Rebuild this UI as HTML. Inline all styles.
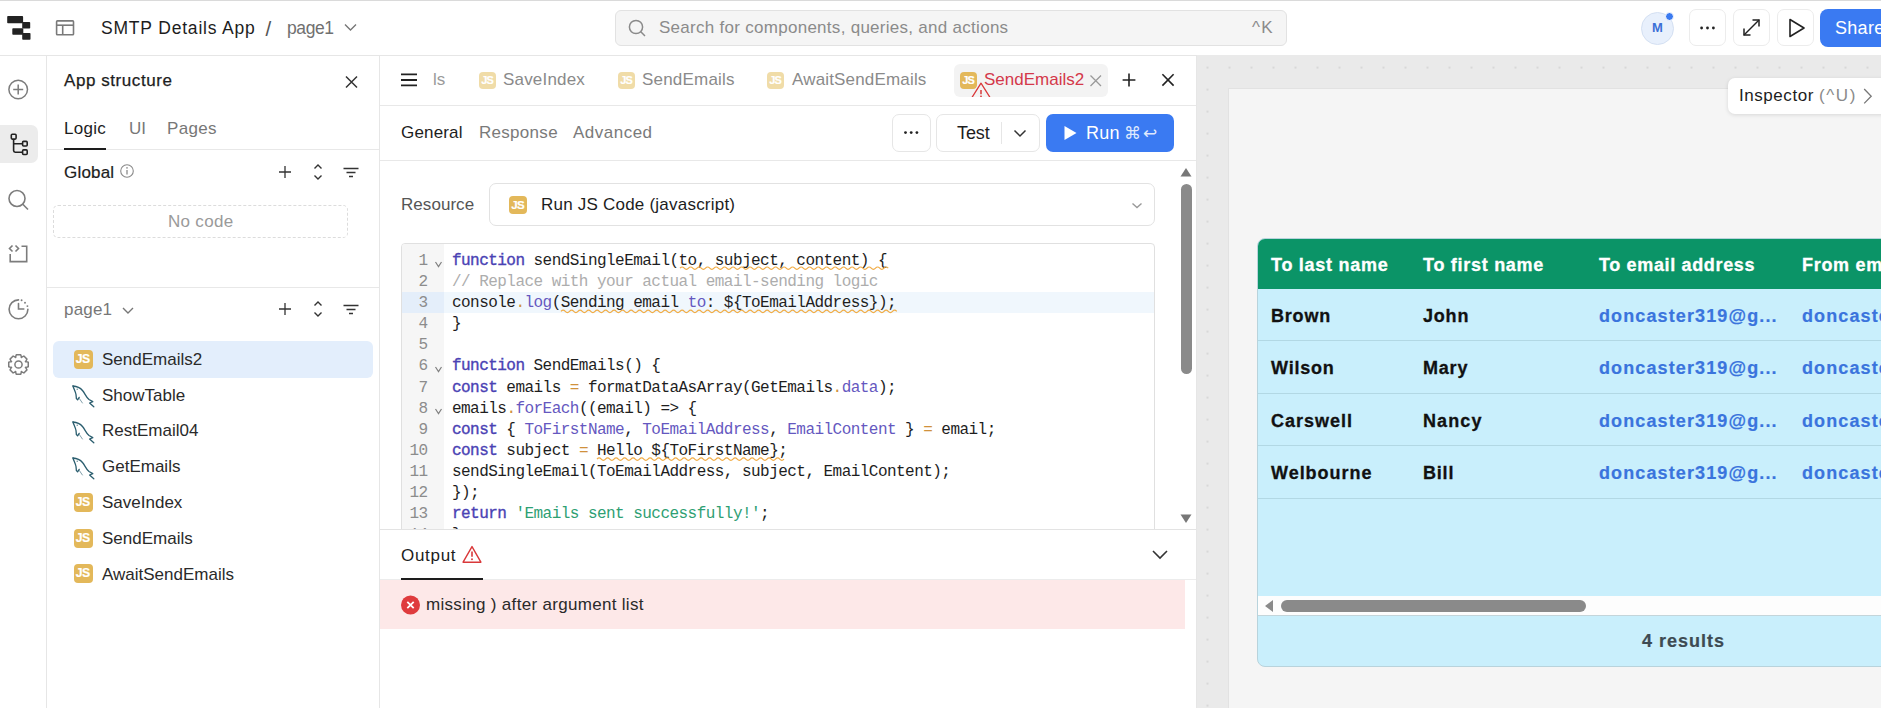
<!DOCTYPE html>
<html><head><meta charset="utf-8"><style>
html,body{margin:0;padding:0;}
body{width:1881px;height:708px;overflow:hidden;position:relative;background:#fff;font-family:"Liberation Sans",sans-serif;}
.t{position:absolute;white-space:pre;}
.r{position:absolute;box-sizing:border-box;}
.js{color:#fff;font-weight:700;text-align:center;font-family:"Liberation Sans",sans-serif;letter-spacing:-0.6px;text-indent:-0.6px;-webkit-text-stroke:0.2px #fff;}
</style></head><body>
<div class="r" style="left:1197px;top:55px;width:684px;height:653px;background:#eaeaea;"></div>
<svg class="r" style="left:1197px;top:56px" width="684" height="652"><defs><pattern id="dots" x="9.5" y="10.6" width="22" height="22" patternUnits="userSpaceOnUse"><circle cx="1" cy="1" r="0.9" fill="#cfcfcf"/></pattern></defs><rect width="684" height="652" fill="url(#dots)"/></svg>
<div class="r" style="left:1228px;top:88px;width:660px;height:630px;background:#f5f5f5;border:1px solid #e2e2e2;"></div>
<div class="r" style="left:0px;top:0px;width:1881px;height:1px;background:#dadada;"></div>
<div class="r" style="left:0px;top:55px;width:1197px;height:1px;background:#e6e6e6;"></div>
<div class="r" style="left:46px;top:56px;width:1px;height:652px;background:#e6e6e6;"></div>
<div class="r" style="left:379px;top:56px;width:1px;height:652px;background:#e6e6e6;"></div>
<div class="r" style="left:1196px;top:56px;width:1px;height:652px;background:#e6e6e6;"></div>
<svg class="r" style="left:0px;top:0px;" width="40" height="48" viewBox="0 0 40 48" fill="none"><g fill="#222"><rect x="7.2" y="16.1" width="15.9" height="7.2" rx="0.8"/><rect x="22.2" y="21.9" width="8" height="6.7" rx="0.8"/><rect x="12.3" y="28.3" width="11" height="6.5" rx="0.8"/><rect x="22.2" y="33" width="8.3" height="6.8" rx="0.8"/></g></svg>
<svg class="r" style="left:50px;top:14px;" width="30" height="28" viewBox="0 0 30 28" fill="none"><g stroke="#7a7a7a" stroke-width="1.6"><rect x="6.6" y="6.9" width="16.9" height="13.9" rx="0.8"/><line x1="6.6" y1="11.2" x2="23.5" y2="11.2"/><line x1="12.7" y1="11.2" x2="12.7" y2="20.8"/></g></svg>
<div class="t" style="left:101px;top:17.14px;font-family:'Liberation Sans', sans-serif;font-size:17.5px;line-height:23px;color:#1d1d1d;font-weight:400;letter-spacing:0.81px;">SMTP Details App</div>
<div class="t" style="left:265.5px;top:14.70px;font-family:'Liberation Sans', sans-serif;font-size:20.5px;line-height:27px;color:#555;font-weight:400;letter-spacing:0px;">/</div>
<div class="t" style="left:287px;top:17.14px;font-family:'Liberation Sans', sans-serif;font-size:17.5px;line-height:23px;color:#707070;font-weight:400;letter-spacing:-0.4px;">page1</div>
<svg class="r" style="left:340px;top:18px;" width="20" height="20" viewBox="0 0 20 20" fill="none"><path d="M5 6.5 L10.5 12 L16 6.5" stroke="#777" stroke-width="1.4"/></svg>
<div class="r" style="left:615px;top:10px;width:672px;height:36px;background:#f5f5f5;border:1px solid #e2e2e2;border-radius:6px;"></div>
<svg class="r" style="left:625px;top:16px;" width="24" height="24" viewBox="0 0 24 24" fill="none"><circle cx="11" cy="11" r="6.6" stroke="#8a8a8a" stroke-width="1.5"/><line x1="15.8" y1="15.8" x2="20" y2="20" stroke="#8a8a8a" stroke-width="1.5"/></svg>
<div class="t" style="left:659px;top:16.81px;font-family:'Liberation Sans', sans-serif;font-size:17px;line-height:22px;color:#8b8b8b;font-weight:400;letter-spacing:0.28px;">Search for components, queries, and actions</div>
<div class="t" style="left:1252px;top:16.81px;font-family:'Liberation Sans', sans-serif;font-size:17px;line-height:22px;color:#8b8b8b;font-weight:400;letter-spacing:1.2px;">^K</div>
<div class="r" style="left:1641px;top:12px;width:33px;height:33px;border-radius:50%;background:#e8f0fc;border:1px solid #d4e0f2;"></div>
<div class="t" style="left:1652px;top:19.30px;font-family:'Liberation Sans', sans-serif;font-size:13px;line-height:17px;color:#3b6fd6;font-weight:700;letter-spacing:0px;">M</div>
<div class="r" style="left:1665px;top:12px;width:9px;height:9px;border-radius:50%;background:#3a7af0;border:1.5px solid #fff;"></div>
<div class="r" style="left:1689px;top:9px;width:37px;height:37px;background:#fff;border:1px solid #ececec;border-radius:7px;"></div>
<div class="r" style="left:1733px;top:9px;width:37px;height:37px;background:#fff;border:1px solid #ececec;border-radius:7px;"></div>
<div class="r" style="left:1777px;top:9px;width:37px;height:37px;background:#fff;border:1px solid #ececec;border-radius:7px;"></div>
<svg class="r" style="left:1689px;top:9px;" width="37" height="37" viewBox="0 0 37 37" fill="none"><g fill="#222"><circle cx="12.6" cy="19" r="1.4"/><circle cx="18.5" cy="19" r="1.4"/><circle cx="24.4" cy="19" r="1.4"/></g></svg>
<svg class="r" style="left:1733px;top:9px;" width="37" height="37" viewBox="0 0 37 37" fill="none"><g stroke="#222" stroke-width="1.5" fill="none"><path d="M11 26 L26 11"/><path d="M19.5 11 H26 V17.5"/><path d="M11 19.5 V26 H17.5"/></g></svg>
<svg class="r" style="left:1777px;top:9px;" width="37" height="37" viewBox="0 0 37 37" fill="none"><path d="M13 10.5 L27 19 L13 27.5 Z" stroke="#222" stroke-width="1.6" stroke-linejoin="round" fill="none"/></svg>
<div class="r" style="left:1820px;top:9px;width:80px;height:38px;background:#3a7af2;border-radius:8px;"></div>
<div class="t" style="left:1835px;top:16.96px;font-family:'Liberation Sans', sans-serif;font-size:18px;line-height:23px;color:#fff;font-weight:400;letter-spacing:0.3px;">Share</div>
<svg class="r" style="left:0px;top:70px;" width="40" height="40" viewBox="0 0 40 40" fill="none"><circle cx="18.2" cy="19.5" r="9.3" stroke="#7c7c7c" stroke-width="1.5"/><path d="M18.2 14.5 V24.5 M13.2 19.5 H23.2" stroke="#7c7c7c" stroke-width="1.5"/></svg>
<div class="r" style="left:0px;top:125px;width:38px;height:38px;background:#ececec;border-radius:0 7px 7px 0;"></div>
<svg class="r" style="left:0px;top:125px;" width="40" height="40" viewBox="0 0 40 40" fill="none"><g stroke="#222" stroke-width="1.6" fill="none"><rect x="11.3" y="9.3" width="4.8" height="4.8" rx="1"/><rect x="22.6" y="16.4" width="4.6" height="4.6" rx="1"/><rect x="22.6" y="24.9" width="4.6" height="4.6" rx="1"/><path d="M13.6 14.1 V25.6 Q13.6 27.2 15.2 27.2 H22.6 M13.6 18.7 H22.6"/></g></svg>
<svg class="r" style="left:0px;top:180px;" width="40" height="40" viewBox="0 0 40 40" fill="none"><circle cx="17" cy="18.5" r="8" stroke="#7c7c7c" stroke-width="1.6"/><line x1="22.8" y1="24.3" x2="28" y2="29.5" stroke="#7c7c7c" stroke-width="1.6"/></svg>
<svg class="r" style="left:0px;top:236px;" width="40" height="40" viewBox="0 0 40 40" fill="none"><g stroke="#7c7c7c" stroke-width="1.6" fill="none"><path d="M12.5 9.5 L9.5 12.5 L12.5 15.5"/><path d="M15.5 9.5 L18.5 12.5 L15.5 15.5"/><path d="M10.2 18 V25.6 H26.7 V10.3 H21.5"/></g></svg>
<svg class="r" style="left:0px;top:290px;" width="40" height="40" viewBox="0 0 40 40" fill="none"><g stroke="#7c7c7c" stroke-width="1.6" fill="none" stroke-linecap="round"><path d="M18.5 9.9 A9.4 9.4 0 1 0 27.9 19.3"/><path d="M18.5 13.6 V19 H23.8"/></g><g fill="#7c7c7c"><circle cx="21.6" cy="10.3" r="0.95"/><circle cx="25" cy="12.7" r="0.95"/><circle cx="27.4" cy="16.1" r="0.95"/></g></svg>
<svg class="r" style="left:0px;top:345px;" width="40" height="40" viewBox="0 0 40 40" fill="none"><polygon points="28.26,17.32 28.26,21.68 25.44,22.60 25.60,22.22 26.94,24.86 23.86,27.94 21.22,26.60 21.60,26.44 20.68,29.26 16.32,29.26 15.40,26.44 15.78,26.60 13.14,27.94 10.06,24.86 11.40,22.22 11.56,22.60 8.74,21.68 8.74,17.32 11.56,16.40 11.40,16.78 10.06,14.14 13.14,11.06 15.78,12.40 15.40,12.56 16.32,9.74 20.68,9.74 21.60,12.56 21.22,12.40 23.86,11.06 26.94,14.14 25.60,16.78 25.44,16.40" stroke="#7c7c7c" stroke-width="1.5" stroke-linejoin="round"/><circle cx="18.5" cy="19.5" r="3.6" stroke="#7c7c7c" stroke-width="1.5"/></svg>
<div class="t" style="left:64px;top:69.51px;font-family:'Liberation Sans', sans-serif;font-size:17px;line-height:22px;color:#1d1d1d;font-weight:400;letter-spacing:0.57px;-webkit-text-stroke:0.25px #1d1d1d;">App structure</div>
<svg class="r" style="left:340px;top:70px;" width="24" height="24" viewBox="0 0 24 24" fill="none"><path d="M6 6.5 L17 17.5 M17 6.5 L6 17.5" stroke="#333" stroke-width="1.5"/></svg>
<div class="t" style="left:64px;top:117.91px;font-family:'Liberation Sans', sans-serif;font-size:17px;line-height:22px;color:#1d1d1d;font-weight:400;letter-spacing:0.3px;">Logic</div>
<div class="t" style="left:129px;top:117.91px;font-family:'Liberation Sans', sans-serif;font-size:17px;line-height:22px;color:#777;font-weight:400;letter-spacing:0px;">UI</div>
<div class="t" style="left:167px;top:117.91px;font-family:'Liberation Sans', sans-serif;font-size:17px;line-height:22px;color:#777;font-weight:400;letter-spacing:0.3px;">Pages</div>
<div class="r" style="left:47px;top:149px;width:332px;height:1px;background:#e8e8e8;"></div>
<div class="r" style="left:64px;top:148px;width:42px;height:2px;background:#1d1d1d;"></div>
<div class="t" style="left:64px;top:162.31px;font-family:'Liberation Sans', sans-serif;font-size:17px;line-height:22px;color:#1d1d1d;font-weight:400;letter-spacing:0.2px;-webkit-text-stroke:0.2px #1d1d1d;">Global</div>
<svg class="r" style="left:118px;top:162px;" width="18" height="18" viewBox="0 0 18 18" fill="none"><circle cx="9" cy="9" r="6.3" stroke="#8a8a8a" stroke-width="1.1"/><path d="M9 8 V12.5" stroke="#8a8a8a" stroke-width="1.3"/><circle cx="9" cy="5.9" r="0.8" fill="#8a8a8a"/></svg>
<svg class="r" style="left:275px;top:162px;" width="20" height="20" viewBox="0 0 20 20" fill="none"><path d="M10 4 V16 M4 10 H16" stroke="#333" stroke-width="1.3"/></svg>
<svg class="r" style="left:308px;top:162px;" width="20" height="20" viewBox="0 0 20 20" fill="none"><path d="M6.5 6.5 L10 3 L13.5 6.5 M6.5 13.5 L10 17 L13.5 13.5" stroke="#333" stroke-width="1.4" fill="none"/></svg>
<svg class="r" style="left:341px;top:162px;" width="20" height="20" viewBox="0 0 20 20" fill="none"><path d="M2.5 6.5 H17.5 M5.5 10.5 H14.5 M8 14.5 H12" stroke="#333" stroke-width="1.3"/></svg>
<div class="r" style="left:53px;top:205px;width:295px;height:33px;border:1px dashed #dcdcdc;border-radius:5px;"></div>
<div class="t" style="left:168px;top:210.91px;font-family:'Liberation Sans', sans-serif;font-size:17px;line-height:22px;color:#9a9a9a;font-weight:400;letter-spacing:0.3px;">No code</div>
<div class="r" style="left:47px;top:287px;width:332px;height:1px;background:#e8e8e8;"></div>
<div class="t" style="left:64px;top:299.11px;font-family:'Liberation Sans', sans-serif;font-size:17px;line-height:22px;color:#777;font-weight:400;letter-spacing:0.2px;">page1</div>
<svg class="r" style="left:117.5px;top:301px;" width="20" height="20" viewBox="0 0 20 20" fill="none"><path d="M5 7 L10 12 L15 7" stroke="#777" stroke-width="1.4" fill="none"/></svg>
<svg class="r" style="left:275px;top:299px;" width="20" height="20" viewBox="0 0 20 20" fill="none"><path d="M10 4 V16 M4 10 H16" stroke="#333" stroke-width="1.3"/></svg>
<svg class="r" style="left:308px;top:299px;" width="20" height="20" viewBox="0 0 20 20" fill="none"><path d="M6.5 6.5 L10 3 L13.5 6.5 M6.5 13.5 L10 17 L13.5 13.5" stroke="#333" stroke-width="1.4" fill="none"/></svg>
<svg class="r" style="left:341px;top:299px;" width="20" height="20" viewBox="0 0 20 20" fill="none"><path d="M2.5 6.5 H17.5 M5.5 10.5 H14.5 M8 14.5 H12" stroke="#333" stroke-width="1.3"/></svg>
<div class="r" style="left:53px;top:341px;width:320px;height:37px;background:#e3eefc;border-radius:6px;"></div>
<div class="r js" style="left:73.5px;top:350px;width:19px;height:19px;background:#e3b85a;border-radius:4px;font-size:12.2px;line-height:19px">JS</div>
<div class="t" style="left:102px;top:348.71px;font-family:'Liberation Sans', sans-serif;font-size:17px;line-height:22px;color:#2a2a2a;font-weight:400;letter-spacing:0px;">SendEmails2</div>
<svg class="r" style="left:72px;top:385px;" width="24" height="24" viewBox="0 0 24 24" fill="none"><g stroke="#2a5d6e" stroke-width="1.3" fill="none" stroke-linejoin="round" stroke-linecap="round"><path d="M1 1 C4 1.2 8 2.5 10.5 5.5 C13 8.5 14 12 17 14.5 L20.8 16.6 L17.6 18 L21.8 21.8"/><path d="M1 1 C1.6 3.5 3.6 6.5 4 9.5 L4.4 13.6 L5.6 14.8 L7.2 12.4"/><path d="M7.4 13.6 L10.4 18" stroke-width="0.6"/></g><circle cx="5.2" cy="4.2" r="0.6" fill="#2a5d6e"/></svg>
<div class="t" style="left:102px;top:384.54px;font-family:'Liberation Sans', sans-serif;font-size:17px;line-height:22px;color:#2a2a2a;font-weight:400;letter-spacing:0px;">ShowTable</div>
<svg class="r" style="left:72px;top:421px;" width="24" height="24" viewBox="0 0 24 24" fill="none"><g stroke="#2a5d6e" stroke-width="1.3" fill="none" stroke-linejoin="round" stroke-linecap="round"><path d="M1 1 C4 1.2 8 2.5 10.5 5.5 C13 8.5 14 12 17 14.5 L20.8 16.6 L17.6 18 L21.8 21.8"/><path d="M1 1 C1.6 3.5 3.6 6.5 4 9.5 L4.4 13.6 L5.6 14.8 L7.2 12.4"/><path d="M7.4 13.6 L10.4 18" stroke-width="0.6"/></g><circle cx="5.2" cy="4.2" r="0.6" fill="#2a5d6e"/></svg>
<div class="t" style="left:102px;top:420.37px;font-family:'Liberation Sans', sans-serif;font-size:17px;line-height:22px;color:#2a2a2a;font-weight:400;letter-spacing:0px;">RestEmail04</div>
<svg class="r" style="left:72px;top:457px;" width="24" height="24" viewBox="0 0 24 24" fill="none"><g stroke="#2a5d6e" stroke-width="1.3" fill="none" stroke-linejoin="round" stroke-linecap="round"><path d="M1 1 C4 1.2 8 2.5 10.5 5.5 C13 8.5 14 12 17 14.5 L20.8 16.6 L17.6 18 L21.8 21.8"/><path d="M1 1 C1.6 3.5 3.6 6.5 4 9.5 L4.4 13.6 L5.6 14.8 L7.2 12.4"/><path d="M7.4 13.6 L10.4 18" stroke-width="0.6"/></g><circle cx="5.2" cy="4.2" r="0.6" fill="#2a5d6e"/></svg>
<div class="t" style="left:102px;top:456.20px;font-family:'Liberation Sans', sans-serif;font-size:17px;line-height:22px;color:#2a2a2a;font-weight:400;letter-spacing:0px;">GetEmails</div>
<div class="r js" style="left:73.5px;top:493px;width:19px;height:19px;background:#e3b85a;border-radius:4px;font-size:12.2px;line-height:19px">JS</div>
<div class="t" style="left:102px;top:492.03px;font-family:'Liberation Sans', sans-serif;font-size:17px;line-height:22px;color:#2a2a2a;font-weight:400;letter-spacing:0px;">SaveIndex</div>
<div class="r js" style="left:73.5px;top:529px;width:19px;height:19px;background:#e3b85a;border-radius:4px;font-size:12.2px;line-height:19px">JS</div>
<div class="t" style="left:102px;top:527.86px;font-family:'Liberation Sans', sans-serif;font-size:17px;line-height:22px;color:#2a2a2a;font-weight:400;letter-spacing:0px;">SendEmails</div>
<div class="r js" style="left:73.5px;top:564px;width:19px;height:19px;background:#e3b85a;border-radius:4px;font-size:12.2px;line-height:19px">JS</div>
<div class="t" style="left:102px;top:563.69px;font-family:'Liberation Sans', sans-serif;font-size:17px;line-height:22px;color:#2a2a2a;font-weight:400;letter-spacing:0px;">AwaitSendEmails</div>
<svg class="r" style="left:398px;top:68px;" width="24" height="24" viewBox="0 0 24 24" fill="none"><path d="M3 6.4 H19 M3 12 H19 M3 17.3 H19" stroke="#222" stroke-width="1.8"/></svg>
<div class="t" style="left:433px;top:68.61px;font-family:'Liberation Sans', sans-serif;font-size:17px;line-height:22px;color:#9a9a9a;font-weight:400;letter-spacing:0px;">ls</div>
<div class="r" style="left:380px;top:105px;width:816px;height:1px;background:#e8e8e8;"></div>
<div class="r js" style="left:479px;top:72px;width:17px;height:17px;background:#f0dca8;border-radius:4px;font-size:10.9px;line-height:17px">JS</div>
<div class="t" style="left:503px;top:68.61px;font-family:'Liberation Sans', sans-serif;font-size:17px;line-height:22px;color:#8a8a8a;font-weight:400;letter-spacing:0.19px;">SaveIndex</div>
<div class="r js" style="left:618px;top:72px;width:17px;height:17px;background:#f0dca8;border-radius:4px;font-size:10.9px;line-height:17px">JS</div>
<div class="t" style="left:642px;top:68.61px;font-family:'Liberation Sans', sans-serif;font-size:17px;line-height:22px;color:#8a8a8a;font-weight:400;letter-spacing:0.2px;">SendEmails</div>
<div class="r js" style="left:767px;top:72px;width:17px;height:17px;background:#f0dca8;border-radius:4px;font-size:10.9px;line-height:17px">JS</div>
<div class="t" style="left:792px;top:68.61px;font-family:'Liberation Sans', sans-serif;font-size:17px;line-height:22px;color:#8a8a8a;font-weight:400;letter-spacing:0.17px;">AwaitSendEmails</div>
<div class="r" style="left:954px;top:64px;width:154px;height:33px;background:#f3f3f3;border-radius:6px;"></div>
<div class="r js" style="left:960px;top:72px;width:17px;height:17px;background:#e3b85a;border-radius:4px;font-size:10.9px;line-height:17px">JS</div>
<svg class="r" style="left:968px;top:78px;" width="26" height="19" viewBox="0 0 26 19" fill="none"><path d="M3 21 L13 5.2 L23 21" stroke="#f4f4f4" stroke-width="3.4" fill="none" stroke-linejoin="round"/><path d="M3 21 L13 5.2 L23 21" stroke="#d9383a" stroke-width="1.3" fill="none" stroke-linejoin="round"/><path d="M13 12 V16.3" stroke="#d9383a" stroke-width="1.5"/><rect x="12.2" y="17.6" width="1.6" height="1.4" fill="#d9383a"/></svg>
<div class="t" style="left:984px;top:68.61px;font-family:'Liberation Sans', sans-serif;font-size:17px;line-height:22px;color:#d4384a;font-weight:400;letter-spacing:0px;">SendEmails2</div>
<svg class="r" style="left:1086px;top:70px;" width="20" height="20" viewBox="0 0 20 20" fill="none"><path d="M4.5 5.5 L15 16 M15 5.5 L4.5 16" stroke="#999" stroke-width="1.3"/></svg>
<svg class="r" style="left:1119px;top:70px;" width="20" height="20" viewBox="0 0 20 20" fill="none"><path d="M10 3.6 V16.4 M3.6 10 H16.4" stroke="#222" stroke-width="1.6"/></svg>
<svg class="r" style="left:1158px;top:70px;" width="20" height="20" viewBox="0 0 20 20" fill="none"><path d="M4.4 4.2 L15.6 15.6 M15.6 4.2 L4.4 15.6" stroke="#222" stroke-width="1.6"/></svg>
<div class="t" style="left:401px;top:121.71px;font-family:'Liberation Sans', sans-serif;font-size:17px;line-height:22px;color:#1d1d1d;font-weight:400;letter-spacing:0.17px;">General</div>
<div class="t" style="left:479px;top:121.71px;font-family:'Liberation Sans', sans-serif;font-size:17px;line-height:22px;color:#7a7a7a;font-weight:400;letter-spacing:0.29px;">Response</div>
<div class="t" style="left:573px;top:121.71px;font-family:'Liberation Sans', sans-serif;font-size:17px;line-height:22px;color:#7a7a7a;font-weight:400;letter-spacing:0.49px;">Advanced</div>
<div class="r" style="left:892px;top:114px;width:39px;height:38px;background:#fff;border:1px solid #e6e6e6;border-radius:7px;"></div>
<svg class="r" style="left:892px;top:114px;" width="39" height="38" viewBox="0 0 39 38" fill="none"><g fill="#222"><circle cx="13.5" cy="18.6" r="1.4"/><circle cx="19.2" cy="18.6" r="1.4"/><circle cx="24.9" cy="18.6" r="1.4"/></g></svg>
<div class="r" style="left:936px;top:114px;width:104px;height:38px;background:#fff;border:1px solid #e6e6e6;border-radius:7px;"></div>
<div class="t" style="left:957px;top:122.46px;font-family:'Liberation Sans', sans-serif;font-size:18px;line-height:23px;color:#1d1d1d;font-weight:400;letter-spacing:-0.1px;">Test</div>
<div class="r" style="left:1001px;top:122px;width:1px;height:22px;background:#e6e6e6;"></div>
<svg class="r" style="left:1010px;top:123px;" width="20" height="20" viewBox="0 0 20 20" fill="none"><path d="M4.5 7.5 L10 13 L15.5 7.5" stroke="#333" stroke-width="1.5" fill="none"/></svg>
<div class="r" style="left:1046px;top:114px;width:128px;height:38px;background:#3a7af2;border-radius:7px;"></div>
<svg class="r" style="left:1060px;top:121px;" width="22" height="24" viewBox="0 0 22 24" fill="none"><path d="M4.5 5 L16.5 12 L4.5 19 Z" fill="#fff"/></svg>
<div class="t" style="left:1086px;top:122.26px;font-family:'Liberation Sans', sans-serif;font-size:18px;line-height:23px;color:#fff;font-weight:400;letter-spacing:0.2px;">Run</div>
<div class="t" style="left:1124px;top:123.11px;font-family:'Liberation Sans', sans-serif;font-size:17px;line-height:22px;color:#dfe9fd;font-weight:400;letter-spacing:2px;">⌘↩</div>
<div class="r" style="left:380px;top:160px;width:816px;height:1px;background:#e8e8e8;"></div>
<svg class="r" style="left:1178px;top:164px;" width="16" height="16" viewBox="0 0 16 16" fill="none"><path d="M2.5 12.5 L8 4 L13.5 12.5 Z" fill="#777"/></svg>
<div class="r" style="left:1181px;top:184px;width:11px;height:190px;background:#8a8a8a;border-radius:6px;"></div>
<svg class="r" style="left:1178px;top:511px;" width="16" height="16" viewBox="0 0 16 16" fill="none"><path d="M2.5 3.5 L8 12 L13.5 3.5 Z" fill="#777"/></svg>
<div class="t" style="left:401px;top:194.11px;font-family:'Liberation Sans', sans-serif;font-size:17px;line-height:22px;color:#555;font-weight:400;letter-spacing:0.05px;">Resource</div>
<div class="r" style="left:489px;top:183px;width:666px;height:43px;background:#fff;border:1px solid #e2e2e2;border-radius:7px;"></div>
<div class="r js" style="left:509px;top:196px;width:18px;height:18px;background:#e3b85a;border-radius:4px;font-size:11.5px;line-height:18px">JS</div>
<div class="t" style="left:541px;top:194.41px;font-family:'Liberation Sans', sans-serif;font-size:17px;line-height:22px;color:#1d1d1d;font-weight:400;letter-spacing:0.22px;">Run JS Code (javascript)</div>
<svg class="r" style="left:1127px;top:195px;" width="20" height="20" viewBox="0 0 20 20" fill="none"><path d="M5.5 8.5 L10 12.5 L14.5 8.5" stroke="#999" stroke-width="1.4" fill="none"/></svg>
<div class="r" style="left:401px;top:243px;width:754px;height:300px;background:#fff;border:1px solid #e0e0e0;border-radius:4px;"></div>
<div class="r" style="left:402px;top:244px;width:42px;height:285px;background:#f6f6f6;border-radius:3px 0 0 0;"></div>
<div class="r" style="left:402px;top:291.5px;width:42px;height:21px;background:#e4eefa;"></div>
<div class="r" style="left:444px;top:291.5px;width:710px;height:21px;background:#f0f7fd;"></div>
<div class="r" style="left:380px;top:244px;width:800px;height:285px;overflow:hidden;">
<div class="t" style="left:38.60000000000002px;top:6.84px;font-family:'Liberation Mono', monospace;font-size:16px;line-height:21px;color:#8c8c8c;font-weight:400;letter-spacing:-0.6px;">1</div>
<div class="t" style="left:72px;top:6.84px;font-family:'Liberation Mono', monospace;font-size:16px;line-height:21px;color:#1e1e1e;font-weight:400;letter-spacing:-0.54px;"><span style="color:#4a42b4;-webkit-text-stroke:0.35px #4a42b4;">function</span><span style="color:#1e1e1e;"> sendSingleEmail(to, subject, content) {</span></div>
<div class="t" style="left:38.60000000000002px;top:27.96px;font-family:'Liberation Mono', monospace;font-size:16px;line-height:21px;color:#8c8c8c;font-weight:400;letter-spacing:-0.6px;">2</div>
<div class="t" style="left:72px;top:27.96px;font-family:'Liberation Mono', monospace;font-size:16px;line-height:21px;color:#1e1e1e;font-weight:400;letter-spacing:-0.54px;"><span style="color:#adadad;">// Replace with your actual email-sending logic</span></div>
<div class="t" style="left:38.60000000000002px;top:49.08px;font-family:'Liberation Mono', monospace;font-size:16px;line-height:21px;color:#8c8c8c;font-weight:400;letter-spacing:-0.6px;">3</div>
<div class="t" style="left:72px;top:49.08px;font-family:'Liberation Mono', monospace;font-size:16px;line-height:21px;color:#1e1e1e;font-weight:400;letter-spacing:-0.54px;"><span style="color:#1e1e1e;">console</span><span style="color:#d0913c;">.</span><span style="color:#6558c0;">log</span><span style="color:#1e1e1e;">(Sending email </span><span style="color:#6558c0;">to</span><span style="color:#1e1e1e;">: ${ToEmailAddress});</span></div>
<div class="t" style="left:38.60000000000002px;top:70.20px;font-family:'Liberation Mono', monospace;font-size:16px;line-height:21px;color:#8c8c8c;font-weight:400;letter-spacing:-0.6px;">4</div>
<div class="t" style="left:72px;top:70.20px;font-family:'Liberation Mono', monospace;font-size:16px;line-height:21px;color:#1e1e1e;font-weight:400;letter-spacing:-0.54px;"><span style="color:#1e1e1e;">}</span></div>
<div class="t" style="left:38.60000000000002px;top:91.32px;font-family:'Liberation Mono', monospace;font-size:16px;line-height:21px;color:#8c8c8c;font-weight:400;letter-spacing:-0.6px;">5</div>
<div class="t" style="left:72px;top:91.32px;font-family:'Liberation Mono', monospace;font-size:16px;line-height:21px;color:#1e1e1e;font-weight:400;letter-spacing:-0.54px;"></div>
<div class="t" style="left:38.60000000000002px;top:112.44px;font-family:'Liberation Mono', monospace;font-size:16px;line-height:21px;color:#8c8c8c;font-weight:400;letter-spacing:-0.6px;">6</div>
<div class="t" style="left:72px;top:112.44px;font-family:'Liberation Mono', monospace;font-size:16px;line-height:21px;color:#1e1e1e;font-weight:400;letter-spacing:-0.54px;"><span style="color:#4a42b4;-webkit-text-stroke:0.35px #4a42b4;">function</span><span style="color:#1e1e1e;"> SendEmails() {</span></div>
<div class="t" style="left:38.60000000000002px;top:133.56px;font-family:'Liberation Mono', monospace;font-size:16px;line-height:21px;color:#8c8c8c;font-weight:400;letter-spacing:-0.6px;">7</div>
<div class="t" style="left:72px;top:133.56px;font-family:'Liberation Mono', monospace;font-size:16px;line-height:21px;color:#1e1e1e;font-weight:400;letter-spacing:-0.54px;"><span style="color:#4a42b4;-webkit-text-stroke:0.35px #4a42b4;">const</span><span style="color:#1e1e1e;"> emails </span><span style="color:#d0913c;">=</span><span style="color:#1e1e1e;"> formatDataAsArray(GetEmails</span><span style="color:#d0913c;">.</span><span style="color:#6558c0;">data</span><span style="color:#1e1e1e;">);</span></div>
<div class="t" style="left:38.60000000000002px;top:154.68px;font-family:'Liberation Mono', monospace;font-size:16px;line-height:21px;color:#8c8c8c;font-weight:400;letter-spacing:-0.6px;">8</div>
<div class="t" style="left:72px;top:154.68px;font-family:'Liberation Mono', monospace;font-size:16px;line-height:21px;color:#1e1e1e;font-weight:400;letter-spacing:-0.54px;"><span style="color:#1e1e1e;">emails</span><span style="color:#d0913c;">.</span><span style="color:#6558c0;">forEach</span><span style="color:#1e1e1e;">((email) =&gt; {</span></div>
<div class="t" style="left:38.60000000000002px;top:175.80px;font-family:'Liberation Mono', monospace;font-size:16px;line-height:21px;color:#8c8c8c;font-weight:400;letter-spacing:-0.6px;">9</div>
<div class="t" style="left:72px;top:175.80px;font-family:'Liberation Mono', monospace;font-size:16px;line-height:21px;color:#1e1e1e;font-weight:400;letter-spacing:-0.54px;"><span style="color:#4a42b4;-webkit-text-stroke:0.35px #4a42b4;">const</span><span style="color:#1e1e1e;"> { </span><span style="color:#6558c0;">ToFirstName</span><span style="color:#1e1e1e;">, </span><span style="color:#6558c0;">ToEmailAddress</span><span style="color:#1e1e1e;">, </span><span style="color:#6558c0;">EmailContent</span><span style="color:#1e1e1e;"> } </span><span style="color:#d0913c;">=</span><span style="color:#1e1e1e;"> email;</span></div>
<div class="t" style="left:29.600000000000023px;top:196.92px;font-family:'Liberation Mono', monospace;font-size:16px;line-height:21px;color:#8c8c8c;font-weight:400;letter-spacing:-0.6px;">10</div>
<div class="t" style="left:72px;top:196.92px;font-family:'Liberation Mono', monospace;font-size:16px;line-height:21px;color:#1e1e1e;font-weight:400;letter-spacing:-0.54px;"><span style="color:#4a42b4;-webkit-text-stroke:0.35px #4a42b4;">const</span><span style="color:#1e1e1e;"> subject </span><span style="color:#d0913c;">=</span><span style="color:#1e1e1e;"> Hello ${ToFirstName};</span></div>
<div class="t" style="left:29.600000000000023px;top:218.04px;font-family:'Liberation Mono', monospace;font-size:16px;line-height:21px;color:#8c8c8c;font-weight:400;letter-spacing:-0.6px;">11</div>
<div class="t" style="left:72px;top:218.04px;font-family:'Liberation Mono', monospace;font-size:16px;line-height:21px;color:#1e1e1e;font-weight:400;letter-spacing:-0.54px;"><span style="color:#1e1e1e;">sendSingleEmail(ToEmailAddress, subject, EmailContent);</span></div>
<div class="t" style="left:29.600000000000023px;top:239.16px;font-family:'Liberation Mono', monospace;font-size:16px;line-height:21px;color:#8c8c8c;font-weight:400;letter-spacing:-0.6px;">12</div>
<div class="t" style="left:72px;top:239.16px;font-family:'Liberation Mono', monospace;font-size:16px;line-height:21px;color:#1e1e1e;font-weight:400;letter-spacing:-0.54px;"><span style="color:#1e1e1e;">});</span></div>
<div class="t" style="left:29.600000000000023px;top:260.28px;font-family:'Liberation Mono', monospace;font-size:16px;line-height:21px;color:#8c8c8c;font-weight:400;letter-spacing:-0.6px;">13</div>
<div class="t" style="left:72px;top:260.28px;font-family:'Liberation Mono', monospace;font-size:16px;line-height:21px;color:#1e1e1e;font-weight:400;letter-spacing:-0.54px;"><span style="color:#4a42b4;-webkit-text-stroke:0.35px #4a42b4;">return</span> <span style="color:#2ea073;">&#x27;Emails sent successfully!&#x27;</span><span style="color:#1e1e1e;">;</span></div>
<div class="t" style="left:29.600000000000023px;top:281.40px;font-family:'Liberation Mono', monospace;font-size:16px;line-height:21px;color:#8c8c8c;font-weight:400;letter-spacing:-0.6px;">14</div>
<div class="t" style="left:72px;top:281.40px;font-family:'Liberation Mono', monospace;font-size:16px;line-height:21px;color:#1e1e1e;font-weight:400;letter-spacing:-0.54px;"><span style="color:#1e1e1e;">}</span></div>
</div>
<svg class="r" style="left:434px;top:261px;" width="10" height="7" viewBox="0 0 10 7" fill="none"><path d="M1.5 1 L4.5 5.6 L7.5 1" stroke="#808080" stroke-width="1.2" fill="none"/></svg>
<svg class="r" style="left:434px;top:366px;" width="10" height="7" viewBox="0 0 10 7" fill="none"><path d="M1.5 1 L4.5 5.6 L7.5 1" stroke="#808080" stroke-width="1.2" fill="none"/></svg>
<svg class="r" style="left:434px;top:408px;" width="10" height="7" viewBox="0 0 10 7" fill="none"><path d="M1.5 1 L4.5 5.6 L7.5 1" stroke="#808080" stroke-width="1.2" fill="none"/></svg>
<svg class="r" style="left:0;top:0" width="1200" height="600"><path d="M680 268.2 Q682.12 265.80 684.25 268.2 T688.50 268.2 T692.75 268.2 T697.00 268.2 T701.25 268.2 T705.50 268.2 T709.75 268.2 T714.00 268.2 T718.25 268.2 T722.50 268.2 T726.75 268.2 T731.00 268.2 T735.25 268.2 T739.50 268.2 T743.75 268.2 T748.00 268.2 T752.25 268.2 T756.50 268.2 T760.75 268.2 T765.00 268.2 T769.25 268.2 T773.50 268.2 T777.75 268.2 T782.00 268.2 T786.25 268.2 T790.50 268.2 T794.75 268.2 T799.00 268.2 T803.25 268.2 T807.50 268.2 T811.75 268.2 T816.00 268.2 T820.25 268.2 T824.50 268.2 T828.75 268.2 T833.00 268.2 T837.25 268.2 T841.50 268.2 T845.75 268.2 T850.00 268.2 T854.25 268.2 T858.50 268.2 T862.75 268.2 T867.00 268.2 T871.25 268.2 T875.50 268.2 T879.75 268.2 T884.00 268.2 T888.25 268.2" stroke="#f1ac45" stroke-width="1.2" fill="none"/></svg>
<svg class="r" style="left:0;top:0" width="1200" height="600"><path d="M561 311.4 Q563.12 309.00 565.25 311.4 T569.50 311.4 T573.75 311.4 T578.00 311.4 T582.25 311.4 T586.50 311.4 T590.75 311.4 T595.00 311.4 T599.25 311.4 T603.50 311.4 T607.75 311.4 T612.00 311.4 T616.25 311.4 T620.50 311.4 T624.75 311.4 T629.00 311.4 T633.25 311.4 T637.50 311.4 T641.75 311.4 T646.00 311.4 T650.25 311.4 T654.50 311.4 T658.75 311.4 T663.00 311.4 T667.25 311.4 T671.50 311.4 T675.75 311.4 T680.00 311.4 T684.25 311.4 T688.50 311.4 T692.75 311.4 T697.00 311.4 T701.25 311.4 T705.50 311.4 T709.75 311.4 T714.00 311.4 T718.25 311.4 T722.50 311.4 T726.75 311.4 T731.00 311.4 T735.25 311.4 T739.50 311.4 T743.75 311.4 T748.00 311.4 T752.25 311.4 T756.50 311.4 T760.75 311.4 T765.00 311.4 T769.25 311.4 T773.50 311.4 T777.75 311.4 T782.00 311.4 T786.25 311.4 T790.50 311.4 T794.75 311.4 T799.00 311.4 T803.25 311.4 T807.50 311.4 T811.75 311.4 T816.00 311.4 T820.25 311.4 T824.50 311.4 T828.75 311.4 T833.00 311.4 T837.25 311.4 T841.50 311.4 T845.75 311.4 T850.00 311.4 T854.25 311.4 T858.50 311.4 T862.75 311.4 T867.00 311.4 T871.25 311.4 T875.50 311.4 T879.75 311.4 T884.00 311.4 T888.25 311.4 T892.50 311.4 T896.75 311.4" stroke="#f1ac45" stroke-width="1.2" fill="none"/></svg>
<svg class="r" style="left:0;top:0" width="1200" height="600"><path d="M597 459.1 Q599.12 456.70 601.25 459.1 T605.50 459.1 T609.75 459.1 T614.00 459.1 T618.25 459.1 T622.50 459.1 T626.75 459.1 T631.00 459.1 T635.25 459.1 T639.50 459.1 T643.75 459.1 T648.00 459.1 T652.25 459.1 T656.50 459.1 T660.75 459.1 T665.00 459.1 T669.25 459.1 T673.50 459.1 T677.75 459.1 T682.00 459.1 T686.25 459.1 T690.50 459.1 T694.75 459.1 T699.00 459.1 T703.25 459.1 T707.50 459.1 T711.75 459.1 T716.00 459.1 T720.25 459.1 T724.50 459.1 T728.75 459.1 T733.00 459.1 T737.25 459.1 T741.50 459.1 T745.75 459.1 T750.00 459.1 T754.25 459.1 T758.50 459.1 T762.75 459.1 T767.00 459.1 T771.25 459.1 T775.50 459.1 T779.75 459.1 T784.00 459.1" stroke="#f1ac45" stroke-width="1.2" fill="none"/></svg>
<div class="r" style="left:380px;top:529px;width:816px;height:1px;background:#e3e3e3;"></div>
<div class="r" style="left:380px;top:530px;width:816px;height:178px;background:#fff;"></div>
<div class="t" style="left:401px;top:544.61px;font-family:'Liberation Sans', sans-serif;font-size:17px;line-height:22px;color:#1d1d1d;font-weight:400;letter-spacing:0.7px;">Output</div>
<svg class="r" style="left:460px;top:543px;" width="24" height="22" viewBox="0 0 24 22" fill="none"><path d="M12 3.6 L20.9 19.2 H3.1 Z" stroke="#d9383a" stroke-width="1.4" fill="none" stroke-linejoin="round"/><path d="M12 8.5 V13.8" stroke="#d9383a" stroke-width="1.6"/><circle cx="12" cy="16.3" r="0.95" fill="#d9383a"/></svg>
<div class="r" style="left:380px;top:579px;width:816px;height:1px;background:#ececec;"></div>
<svg class="r" style="left:1148px;top:544px;" width="24" height="22" viewBox="0 0 24 22" fill="none"><path d="M5 7 L12 14 L19 7" stroke="#333" stroke-width="1.6" fill="none"/></svg>
<div class="r" style="left:380px;top:580px;width:805px;height:49px;background:#fde8e8;"></div>
<svg class="r" style="left:400px;top:594.5px;" width="22" height="22" viewBox="0 0 22 22" fill="none"><circle cx="10.5" cy="10" r="9.5" fill="#df3b3d"/><path d="M7.3 6.8 L13.7 13.2 M13.7 6.8 L7.3 13.2" stroke="#fff" stroke-width="1.8"/></svg>
<div class="t" style="left:426px;top:594.11px;font-family:'Liberation Sans', sans-serif;font-size:17px;line-height:22px;color:#2a2a2a;font-weight:400;letter-spacing:0.31px;">missing ) after argument list</div>
<div class="r" style="left:401px;top:578px;width:82px;height:1.6px;background:#1d1d1d;"></div>
<div class="r" style="left:1728px;top:78px;width:170px;height:36px;background:#fff;border-radius:7px;box-shadow:0 1px 4px rgba(0,0,0,0.12);"></div>
<div class="t" style="left:1739px;top:84.61px;font-family:'Liberation Sans', sans-serif;font-size:17px;line-height:22px;color:#1d1d1d;font-weight:400;letter-spacing:0.55px;">Inspector</div>
<div class="t" style="left:1819px;top:84.61px;font-family:'Liberation Sans', sans-serif;font-size:17px;line-height:22px;color:#8a8a8a;font-weight:400;letter-spacing:1.6px;">(^U)</div>
<svg class="r" style="left:1860px;top:86px;" width="16" height="20" viewBox="0 0 16 20" fill="none"><path d="M4.2 3 L11.2 10.2 L4.2 17.4" stroke="#777" stroke-width="1.3" fill="none"/></svg>
<div class="r" style="left:1257px;top:238px;width:641px;height:429px;border-radius:8px;background:#c9effc;border:1px solid #b8d3dc;overflow:hidden;">
<div class="r" style="left:-1px;top:-1px;width:642px;height:51px;background:#0b9467;"></div>
<div class="r" style="left:0;top:101px;width:640px;height:1px;background:#b2d8e4;"></div>
<div class="r" style="left:0;top:154px;width:640px;height:1px;background:#b2d8e4;"></div>
<div class="r" style="left:0;top:206px;width:640px;height:1px;background:#b2d8e4;"></div>
<div class="r" style="left:0;top:258.5px;width:640px;height:1px;background:#b2d8e4;"></div>
<div class="r" style="left:0;top:357px;width:640px;height:20px;background:#fdfdfd;border-bottom:1px solid #c4d5da;"></div>
</div>
<svg class="r" style="left:1262px;top:598px;" width="14" height="16" viewBox="0 0 14 16" fill="none"><path d="M11 2 L3 8 L11 14 Z" fill="#8a8a8a"/></svg>
<div class="r" style="left:1281px;top:599.5px;width:305px;height:12px;background:#8a8a8a;border-radius:6px;"></div>
<div class="t" style="left:1271px;top:254.26px;font-family:'Liberation Sans', sans-serif;font-size:18px;line-height:23px;color:#fff;font-weight:700;letter-spacing:0.73px;-webkit-text-stroke:0.3px #fff;">To last name</div>
<div class="t" style="left:1423px;top:254.26px;font-family:'Liberation Sans', sans-serif;font-size:18px;line-height:23px;color:#fff;font-weight:700;letter-spacing:0.72px;-webkit-text-stroke:0.3px #fff;">To first name</div>
<div class="t" style="left:1599px;top:254.26px;font-family:'Liberation Sans', sans-serif;font-size:18px;line-height:23px;color:#fff;font-weight:700;letter-spacing:0.6499999999999999px;-webkit-text-stroke:0.3px #fff;">To email address</div>
<div class="t" style="left:1802px;top:254.26px;font-family:'Liberation Sans', sans-serif;font-size:18px;line-height:23px;color:#fff;font-weight:700;letter-spacing:0.7px;-webkit-text-stroke:0.3px #fff;">From email</div>
<div class="t" style="left:1271px;top:305.06px;font-family:'Liberation Sans', sans-serif;font-size:18px;line-height:23px;color:#111;font-weight:700;letter-spacing:0.8px;-webkit-text-stroke:0.3px #111;">Brown</div>
<div class="t" style="left:1423px;top:305.06px;font-family:'Liberation Sans', sans-serif;font-size:18px;line-height:23px;color:#111;font-weight:700;letter-spacing:0.8px;-webkit-text-stroke:0.3px #111;">John</div>
<div class="t" style="left:1599px;top:305.06px;font-family:'Liberation Sans', sans-serif;font-size:18px;line-height:23px;color:#3a74dd;font-weight:700;letter-spacing:1.12px;-webkit-text-stroke:0.2px #3a74dd;">doncaster319@g...</div>
<div class="t" style="left:1802px;top:305.06px;font-family:'Liberation Sans', sans-serif;font-size:18px;line-height:23px;color:#3a74dd;font-weight:700;letter-spacing:1.12px;-webkit-text-stroke:0.2px #3a74dd;">doncaster319@g...</div>
<div class="t" style="left:1271px;top:357.46px;font-family:'Liberation Sans', sans-serif;font-size:18px;line-height:23px;color:#111;font-weight:700;letter-spacing:0.8px;-webkit-text-stroke:0.3px #111;">Wilson</div>
<div class="t" style="left:1423px;top:357.46px;font-family:'Liberation Sans', sans-serif;font-size:18px;line-height:23px;color:#111;font-weight:700;letter-spacing:0.8px;-webkit-text-stroke:0.3px #111;">Mary</div>
<div class="t" style="left:1599px;top:357.46px;font-family:'Liberation Sans', sans-serif;font-size:18px;line-height:23px;color:#3a74dd;font-weight:700;letter-spacing:1.12px;-webkit-text-stroke:0.2px #3a74dd;">doncaster319@g...</div>
<div class="t" style="left:1802px;top:357.46px;font-family:'Liberation Sans', sans-serif;font-size:18px;line-height:23px;color:#3a74dd;font-weight:700;letter-spacing:1.12px;-webkit-text-stroke:0.2px #3a74dd;">doncaster319@g...</div>
<div class="t" style="left:1271px;top:409.86px;font-family:'Liberation Sans', sans-serif;font-size:18px;line-height:23px;color:#111;font-weight:700;letter-spacing:1.0px;-webkit-text-stroke:0.3px #111;">Carswell</div>
<div class="t" style="left:1423px;top:409.86px;font-family:'Liberation Sans', sans-serif;font-size:18px;line-height:23px;color:#111;font-weight:700;letter-spacing:1.1px;-webkit-text-stroke:0.3px #111;">Nancy</div>
<div class="t" style="left:1599px;top:409.86px;font-family:'Liberation Sans', sans-serif;font-size:18px;line-height:23px;color:#3a74dd;font-weight:700;letter-spacing:1.12px;-webkit-text-stroke:0.2px #3a74dd;">doncaster319@g...</div>
<div class="t" style="left:1802px;top:409.86px;font-family:'Liberation Sans', sans-serif;font-size:18px;line-height:23px;color:#3a74dd;font-weight:700;letter-spacing:1.12px;-webkit-text-stroke:0.2px #3a74dd;">doncaster319@g...</div>
<div class="t" style="left:1271px;top:462.26px;font-family:'Liberation Sans', sans-serif;font-size:18px;line-height:23px;color:#111;font-weight:700;letter-spacing:0.98px;-webkit-text-stroke:0.3px #111;">Welbourne</div>
<div class="t" style="left:1423px;top:462.26px;font-family:'Liberation Sans', sans-serif;font-size:18px;line-height:23px;color:#111;font-weight:700;letter-spacing:0.8px;-webkit-text-stroke:0.3px #111;">Bill</div>
<div class="t" style="left:1599px;top:462.26px;font-family:'Liberation Sans', sans-serif;font-size:18px;line-height:23px;color:#3a74dd;font-weight:700;letter-spacing:1.12px;-webkit-text-stroke:0.2px #3a74dd;">doncaster319@g...</div>
<div class="t" style="left:1802px;top:462.26px;font-family:'Liberation Sans', sans-serif;font-size:18px;line-height:23px;color:#3a74dd;font-weight:700;letter-spacing:1.12px;-webkit-text-stroke:0.2px #3a74dd;">doncaster319@g...</div>
<div class="t" style="left:1642px;top:630.26px;font-family:'Liberation Sans', sans-serif;font-size:18px;line-height:23px;color:#3d4a52;font-weight:700;letter-spacing:1.0px;-webkit-text-stroke:0.2px #3d4a52;">4 results</div>
</body></html>
